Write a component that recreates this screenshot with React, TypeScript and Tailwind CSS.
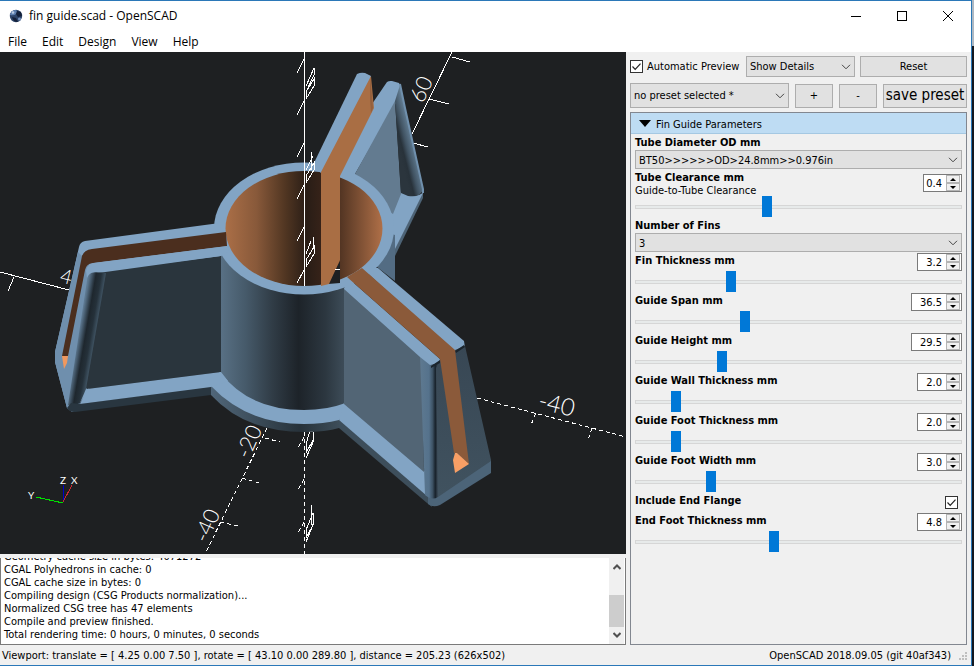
import type { ReactNode } from "react";

type SliderParam = {
  id: string;
  label: string;
  note?: string;
  value: string;
  min: number;
  max: number;
  width: string;
};

const clearance: SliderParam = {
  id: "clearance",
  label: "Tube Clearance mm",
  note: "Guide-to-Tube Clearance",
  value: "0.4",
  min: 0,
  max: 1,
  width: "w-[39px]",
};

const params: SliderParam[] = [
  { id: "fin", label: "Fin Thickness mm", value: "3.2", min: 0.5, max: 10, width: "w-[45px]" },
  { id: "span", label: "Guide Span mm", value: "36.5", min: 5, max: 100, width: "w-[51px]" },
  { id: "height", label: "Guide Height mm", value: "29.5", min: 5, max: 100, width: "w-[51px]" },
  { id: "wall", label: "Guide Wall Thickness mm", value: "2.0", min: 1, max: 10, width: "w-[45px]" },
  { id: "foot", label: "Guide Foot Thickness mm", value: "2.0", min: 1, max: 10, width: "w-[45px]" },
  { id: "footwidth", label: "Guide Foot Width mm", value: "3.0", min: 1, max: 10, width: "w-[45px]" },
];

const endFoot: SliderParam = {
  id: "endfoot",
  label: "End Foot Thickness mm",
  value: "4.8",
  min: 1,
  max: 10,
  width: "w-[45px]",
};

const log = [
  "Geometry cache size in bytes: 4071272",
  "CGAL Polyhedrons in cache: 0",
  "CGAL cache size in bytes: 0",
  "Compiling design (CSG Products normalization)...",
  "Normalized CSG tree has 47 elements",
  "Compile and preview finished.",
  "Total rendering time: 0 hours, 0 minutes, 0 seconds",
];

function Select({ id, label, value, className }: { id: string; label: string; value: string; className: string }) {
  return (
    <div className={`relative ${className}`}>
      <select
        id={id}
        aria-label={label}
        className="h-full w-full appearance-none border border-[#adadad] bg-[#e1e1e1] pl-[3px] pr-5 pt-0.5"
      >
        <option>{value}</option>
      </select>
      <svg
        viewBox="0 0 10 6"
        className="pointer-events-none absolute right-1 top-1/2 h-1.5 w-2.5 -translate-y-1/2"
        fill="none"
        stroke="#444"
      >
        <path d="M1 .8 5 4.8 9 .8" />
      </svg>
    </div>
  );
}

function CheckBox({ id, label }: { id: string; label?: string }) {
  return (
    <span className="relative block h-[13px] w-[13px]">
      <input
        id={id}
        aria-label={label}
        type="checkbox"
        defaultChecked
        className="block h-full w-full appearance-none border border-[#333] bg-white"
      />
      <svg
        viewBox="0 0 13 13"
        className="pointer-events-none absolute inset-0 h-full w-full"
        fill="none"
        stroke="#222"
        strokeWidth="1.2"
      >
        <path d="m2.5 6.5 2.7 2.8 5.3-5.6" />
      </svg>
    </span>
  );
}

function SpinBox({ id, label, value, width }: { id: string; label: string; value: string; width: string }) {
  return (
    <div className={`flex h-[18px] border border-[#7a7a7a] bg-white ${width}`}>
      <input
        id={id}
        aria-label={label}
        defaultValue={value}
        className="min-w-0 flex-1 bg-white pr-1 pt-0.5 text-right"
      />
      <div className="mr-px flex w-[14px] flex-col">
        <button aria-label={`Increase ${label}`} className="flex flex-1 items-center justify-center border border-[#b4b4b4] bg-[#f0f0f0]">
          <svg viewBox="0 0 6 3" className="h-[3px] w-1.5">
            <path d="M3 0 6 3H0z" />
          </svg>
        </button>
        <button aria-label={`Decrease ${label}`} className="flex flex-1 items-center justify-center border border-[#b4b4b4] bg-[#f0f0f0]">
          <svg viewBox="0 0 6 3" className="h-[3px] w-1.5">
            <path d="M0 0h6L3 3z" />
          </svg>
        </button>
      </div>
    </div>
  );
}

function ParamLabel({ htmlFor, children }: { htmlFor: string; children: ReactNode }) {
  return (
    <label htmlFor={htmlFor} className="block pt-0.5 text-[11px] font-bold leading-[14px]">
      {children}
    </label>
  );
}

function SliderRow({ param }: { param: SliderParam }) {
  return (
    <div>
      <div className="flex items-center justify-between">
        <div className={param.note ? "" : "h-5"}>
          <ParamLabel htmlFor={param.id}>{param.label}</ParamLabel>
          {param.note && <p className="leading-3">{param.note}</p>}
        </div>
        <SpinBox id={`${param.id}-value`} label={`${param.label} value`} value={param.value} width={param.width} />
      </div>
      <input
        id={param.id}
        type="range"
        min={param.min}
        max={param.max}
        step="any"
        defaultValue={param.value}
        className="block h-5 w-full appearance-none bg-transparent [&::-webkit-slider-runnable-track]:h-1 [&::-webkit-slider-runnable-track]:border [&::-webkit-slider-runnable-track]:border-[#d6d6d6] [&::-webkit-slider-runnable-track]:bg-[#e7eaea] [&::-webkit-slider-thumb]:-mt-[10px] [&::-webkit-slider-thumb]:h-[21px] [&::-webkit-slider-thumb]:w-[10px] [&::-webkit-slider-thumb]:appearance-none [&::-webkit-slider-thumb]:bg-[#0078d7]"
      />
    </div>
  );
}

function Viewport() {
  return (
    <svg viewBox="0 52 626 502" preserveAspectRatio="xMidYMid slice" className="h-full w-full bg-[#1e2022]">
      <defs>
        <linearGradient id="bore" x1="225" x2="383" y1="0" y2="0" gradientUnits="userSpaceOnUse">
          <stop offset="0" stopColor="#ab6f47" />
          <stop offset=".2" stopColor="#88593a" />
          <stop offset=".38" stopColor="#513622" />
          <stop offset=".52" stopColor="#291d16" />
          <stop offset=".62" stopColor="#382319" />
          <stop offset=".73" stopColor="#533523" />
          <stop offset="1" stopColor="#b07048" />
        </linearGradient>
        <linearGradient id="tube" x1="221" x2="344" y1="0" y2="0" gradientUnits="userSpaceOnUse">
          <stop offset="0" stopColor="#587084" />
          <stop offset=".2" stopColor="#465a6a" />
          <stop offset=".42" stopColor="#303c46" />
          <stop offset=".63" stopColor="#1d2329" />
          <stop offset=".85" stopColor="#2c3740" />
          <stop offset="1" stopColor="#3d4c58" />
        </linearGradient>
        <linearGradient id="rim" x1="211" x2="339" y1="0" y2="0" gradientUnits="userSpaceOnUse">
          <stop offset="0" stopColor="#506679" />
          <stop offset=".7" stopColor="#27323a" />
          <stop offset="1" stopColor="#3d4d59" />
        </linearGradient>
        <linearGradient id="leftEnd" x1="75" x2="98" y1="330" y2="334" gradientUnits="userSpaceOnUse">
          <stop offset="0" stopColor="#6e8dab" />
          <stop offset=".2" stopColor="#5b768e" />
          <stop offset=".48" stopColor="#1e272e" />
          <stop offset=".7" stopColor="#25313a" />
          <stop offset="1" stopColor="#4d6578" />
        </linearGradient>
        <linearGradient id="backEnd" x1="400" x2="416" y1="155" y2="151" gradientUnits="userSpaceOnUse">
          <stop offset="0" stopColor="#2b353d" />
          <stop offset=".25" stopColor="#28323a" />
          <stop offset=".5" stopColor="#405261" />
          <stop offset="1" stopColor="#658198" />
        </linearGradient>
        <linearGradient id="frontEdge" x1="420" x2="438" y1="0" y2="0" gradientUnits="userSpaceOnUse">
          <stop offset="0" stopColor="#5e7990" />
          <stop offset=".5" stopColor="#55728c" />
          <stop offset=".7" stopColor="#3d5264" />
          <stop offset=".85" stopColor="#18222b" />
          <stop offset="1" stopColor="#3c4b58" />
        </linearGradient>
        <linearGradient id="frontEnd" x1="0" x2="0" y1="345" y2="495" gradientUnits="userSpaceOnUse">
          <stop offset="0" stopColor="#384754" />
          <stop offset="1" stopColor="#40525f" />
        </linearGradient>
      </defs>

      {/* axes behind the model */}
      <g stroke="#fff" fill="none" shapeRendering="crispEdges">
        <path d="M452 52 412 134M452 57l18 5M429 99l20 5M413 143l15 4" />
        <path d="M0 272l69 18M14 277l-6 14" />
        <path strokeDasharray="4 3" d="M477 398l149 39M536 413l-5 12M592 428l-4 12" />
        <path strokeDasharray="4 3" d="M267 428 205 554M265 438l15 4M242 478l17 5M220 522l18 4" />
        <path strokeDasharray="4 3" d="M304.500 425V554M304 437l-6 11M304 479l-6 11M304 522l-6 11" />
        <path d="M306 453l7-13v-8l-3-1-4 13zM306 458l8-18M306 538l7-13v-12l-7 17zM306 542l8-20M311 505v20" />
      </g>
      <g fill="#fff" className="font-[Lato] font-light">
        <text fontSize="24" transform="translate(537 408) rotate(14)">-40</text>
        <text fontSize="22" transform="translate(249 460) rotate(-66)">-20</text>
        <text fontSize="22" transform="translate(207 544) rotate(-66)">-40</text>
        <text fontSize="22" transform="translate(423 104) rotate(-66)">60</text>
        <text fontSize="20" transform="translate(59 282) rotate(14)">4</text>
      </g>

      {/* rear fin */}
      <path fill="#4d6376" d="M423 192v6l-28 58-12-20z" />
      <path fill="#82a4c4" d="M401 192l18 3 4-2-28 56-20 4-2-40 20-10z" />
      <path fill="#82a4c4" d="M387 82q2-1.500 5-1l7 2 2 4-5 16-41 71-14 3-4-10 7-22z" />
      <path fill="#637b90" d="M395 101l6 93-8 20-38-24v-16z" />
      <path fill="url(#backEnd)" d="M395 101l5-16 23 104q-2 9-15 7l-7-3z" />
      <path fill="none" stroke="#7090ad" strokeWidth="2" d="M400 84l5 24 18 81v4" />

      {/* tube flange and wall */}
      <path fill="url(#rim)" d="M211 386v9q34 37 93 37 22 0 35-4v-10z" />
      <path fill="#82a4c4" d="M211 386q36 38 93 38 20 0 35-4l8-10-3-40H221z" />
      <path fill="#536c83" d="M380 230l15 5v46l-18-14z" />
      <path fill="url(#tube)" d="M221 254h123v149.500q-17 6.500-40 6.500-55 0-83-37z" />
      <ellipse cx="304" cy="228.500" rx="90" ry="66" fill="#82a4c4" />
      <ellipse cx="304" cy="228.500" rx="78.500" ry="57.500" fill="url(#bore)" />

      {/* rear fin slot */}
      <path fill="#1e2022" d="M340 261v22l-12 1z" />
      <path fill="#82a4c4" d="M357 74q4-2 8-1l6 3-1 20-48 78-9-9z" />
      <path fill="#a96e44" d="M371 76l3 32-34 68v84l-11 24-8 2V172z" />
      <path fill="#94603d" d="M370 76l3 32-2 5-1-15z" />

      {/* left fin */}
      <path fill="#82a4c4" d="M216 223.500 85 241q-5 1-6 6L55 352v10l12 46 6 4 7-9 64-102 77-45 8-8-10-24z" />
      <path fill="#6f8fad" d="M78 252 55 352v10l12 46 5 4 22-138-8-14z" />
      <path fill="#4b2e1e" d="M226 232 92 249q-8 1-10 7L62 356h6l17-86q1-6 8-7l134-17z" />
      <path fill="#f0985f" d="M62 356h6l-1 7-3 6z" />
      <path fill="#2a353d" d="M221 256v116L87 389l-10-10 14-105z" />
      <path fill="url(#leftEnd)" d="M88 274q2-3 18-1L86 389l-6 14q-8 5-12 2z" />
      <path fill="#293640" d="M71 403l9 1 131-18v9L75 412q-6 0-8-4z" />
      <path fill="#82a4c4" d="M87 389l134-17 7 9-17 6-131 17z" />
      <path fill="#82a4c4" d="M228 246 94 263q-7 1-8 8l1 7q2-5 7-6l127-16 8-5z" />

      {/* front right fin */}
      <path fill="#3d4e5b" d="M339 419l89 76 4 12-5-4-88-75z" />
      <path fill="#82a4c4" d="M344 403l81 68 2 25-88-76z" />
      <path fill="#526575" d="M344 287l78 68 2 117-80-68z" />
      <path fill="#82a4c4" d="M362 268l16 0 86 73 1 7-10 4-18-14z" />
      <path fill="url(#frontEnd)" d="M430 366l10-6 15-10 10-4 26 114v4l-51 36-10 2z" />
      <path fill="#4c6478" d="M428 497l10 0 53-36v12l-51 32q-7 3-12-1z" />
      <path fill="url(#frontEdge)" d="M420 356l12 6 8 0-4 6 2 129q-6 4-13-2z" />
      <path fill="#82a4c4" d="M347 277l93 82-1 4-9 2-10-8-76-68z" />
      <path fill="#1c252d" d="M431 366l9-6v3l-9 5zM455 351l9-6 1 2-9 6z" />
      <path fill="#8b5a3a" d="M347 277l15-9 93 82 14 114-12-11h-3l-14-94z" />
      <path fill="#f89f65" d="M455 453l2 0 12 11-14 9-2-13z" />

      {/* vertical axis over the model */}
      <g stroke="#fff" fill="none" shapeRendering="crispEdges">
        <path d="M304.500 52V286" />
        <path d="M297 73l7-14M297 115l7-14M297 157l7-14M297 199l7-14M297 241l7-14M297 283l7-13" />
        <path d="M306 86l8-18v7l-8 17M306 92l8-13v7l-8 13z" />
        <path d="M306 176l8-13v7l-8 13zM306 170l7-14M311 152v18" />
        <path d="M306 260l8-13v7l-8 13zM306 254l5-13M313 237v12M335 269h5" />
      </g>

      {/* orientation gizmo */}
      <g fill="none" shapeRendering="crispEdges">
        <path stroke="#0000c8" d="M63 502v-17" />
        <path stroke="#c82832" d="M63 502l9-17" />
        <path stroke="#00e000" d="M63 503l-27-6" />
      </g>
      <g fill="#fff" fontSize="10" className="font-[Lato]">
        <text x="60" y="484">Z</text>
        <text x="71" y="484">X</text>
        <text x="28" y="499">Y</text>
      </g>
    </svg>
  );
}

export default function App() {
  return (
    <div className="flex h-screen bg-[linear-gradient(#aeb8c2_46px,#14181f_46px)] pr-0.5 font-['DejaVu_Sans_Condensed','DejaVu_Sans',sans-serif] text-[11px] text-black">
      <div className="flex min-w-0 flex-1 flex-col border-b border-r border-t border-[#2b78b8] bg-[#f0f0f0]">
        <header className="bg-white font-['Open_Sans',sans-serif] text-xs">
          <div className="flex h-[30px] items-center pl-2">
            <svg viewBox="0 0 16 16" className="h-4 w-4">
              <circle cx="8" cy="8" r="6.200" fill="#2d4468" />
              <path d="M2 7q1-5 6-5 2 2 0 4T2 7z" fill="#5d7fae" />
              <path d="M9 3l4 1 1 4-4 1-2-3zM4 9l4 1 2 4q-5 0-6-5z" fill="#14213a" />
              <circle cx="5" cy="4.500" r="1.300" fill="#b9cbe3" />
              <circle cx="11.500" cy="11" r="1.500" fill="#7694c0" />
            </svg>
            <h1 className="ml-[5px] flex-1">fin guide.scad - OpenSCAD</h1>
            <button aria-label="Minimize" className="flex h-full w-[46px] items-center justify-center">
              <svg viewBox="0 0 10 10" className="h-2.5 w-2.5" stroke="#000" shapeRendering="crispEdges">
                <path d="M0 5.500h10" />
              </svg>
            </button>
            <button aria-label="Maximize" className="flex h-full w-[46px] items-center justify-center">
              <svg viewBox="0 0 10 10" className="h-2.5 w-2.5" stroke="#000" fill="none" shapeRendering="crispEdges">
                <path d="M.5.5h9v9h-9z" />
              </svg>
            </button>
            <button aria-label="Close" className="flex h-full w-[46px] items-center justify-center">
              <svg viewBox="0 0 10 10" className="h-2.5 w-2.5" stroke="#000" fill="none">
                <path d="m0 0 10 10M10 0 0 10" />
              </svg>
            </button>
          </div>
          <nav className="flex h-[21px] items-center gap-[15px] pl-2">
            <button>File</button>
            <button>Edit</button>
            <button>Design</button>
            <button>View</button>
            <button>Help</button>
          </nav>
        </header>

        <main className="flex min-h-0 flex-1">
          <section className="flex min-w-0 flex-1 flex-col gap-1">
            <div className="min-h-0 flex-1">
              <Viewport />
            </div>
            <div className="flex h-[87px] border-x border-b border-[#7a7a7a] bg-white">
              <div className="flex min-w-0 flex-1 flex-col justify-end overflow-hidden pb-[3px] pl-[3px] leading-[13px]">
                {log.map((line) => (
                  <p key={line}>{line}</p>
                ))}
              </div>
              <div className="mr-px flex w-[15px] flex-col items-center bg-[#f0f0f0] py-[5px]">
                <svg viewBox="0 0 8 6" className="h-2 w-2" fill="none" stroke="#505050" strokeWidth="2">
                  <path d="M.5 5 4 1.500 7.500 5" />
                </svg>
                <div className="mt-auto h-8 w-full bg-[#cdcdcd]" />
                <svg viewBox="0 0 8 6" className="mt-1 h-2 w-2" fill="none" stroke="#505050" strokeWidth="2">
                  <path d="M.5 1 4 4.500 7.500 1" />
                </svg>
              </div>
            </div>
          </section>

          <aside className="flex w-[345px] shrink-0 flex-col px-1 pt-1">
            <div className="mb-1.5 flex h-[21px] items-center">
              <CheckBox id="auto" />
              <label htmlFor="auto" className="ml-1 flex-1 pt-0.5">
                Automatic Preview
              </label>
              <Select id="details" label="Details" value="Show Details" className="h-[21px] w-[109px]" />
              <button className="ml-[5px] h-[21px] w-[107px] border border-[#adadad] bg-[#e1e1e1] pt-0.5">Reset</button>
            </div>
            <div className="mb-1 flex h-[25px] items-center gap-1.5">
              <Select id="preset" label="Preset" value="no preset selected *" className="h-full min-w-0 flex-1" />
              <button className="h-6 w-[38px] border border-[#adadad] bg-[#e1e1e1] pt-0.5">+</button>
              <button className="h-6 w-[38px] border border-[#adadad] bg-[#e1e1e1] pt-0.5">-</button>
              <button className="flex h-6 w-[84px] items-center justify-center whitespace-nowrap border border-[#adadad] bg-[#e1e1e1] text-[15px]">
                save preset
              </button>
            </div>

            <div className="flex-1 border border-[#828790]">
              <button className="flex h-[21px] w-full items-center border-b border-[#a5c8e2] bg-[#bedcf3] pl-2">
                <svg viewBox="0 0 12 7" className="h-[7px] w-3">
                  <path d="M0 0h12L6 7z" />
                </svg>
                <span className="ml-[5px] pt-1">Fin Guide Parameters</span>
              </button>
              <div className="px-1">
                <ParamLabel htmlFor="diameter">Tube Diameter OD mm</ParamLabel>
                <Select
                  id="diameter"
                  label="Tube Diameter OD mm"
                  value="BT50>>>>>>OD>24.8mm>>0.976in"
                  className="h-[19px]"
                />
                <SliderRow param={clearance} />
                <ParamLabel htmlFor="fins">Number of Fins</ParamLabel>
                <Select id="fins" label="Number of Fins" value="3" className="h-[19px]" />
                {params.map((param) => (
                  <SliderRow key={param.id} param={param} />
                ))}
                <div className="flex h-5 items-center justify-between pr-1">
                  <div className="h-5">
                    <ParamLabel htmlFor="flange">Include End Flange</ParamLabel>
                  </div>
                  <CheckBox id="flange" />
                </div>
                <SliderRow param={endFoot} />
              </div>
            </div>
          </aside>
        </main>

        <footer className="flex h-5 items-center justify-between pl-0.5 pt-0.5">
          <span className="whitespace-nowrap">
            Viewport: translate = [ 4.25 0.00 7.50 ], rotate = [ 43.10 0.00 289.80 ], distance = 205.23 (626x502)
          </span>
          <span className="flex items-end gap-2">
            OpenSCAD 2018.09.05 (git 40af343)
            <svg viewBox="0 0 12 12" className="h-3 w-3" fill="#bfbfbf">
              <path d="M6 0h2v2H6zM6 3h2v2H6zM3 3h2v2H3zM6 6h2v2H6zM3 6h2v2H3zM0 6h2v2H0z" />
            </svg>
          </span>
        </footer>
      </div>
    </div>
  );
}
